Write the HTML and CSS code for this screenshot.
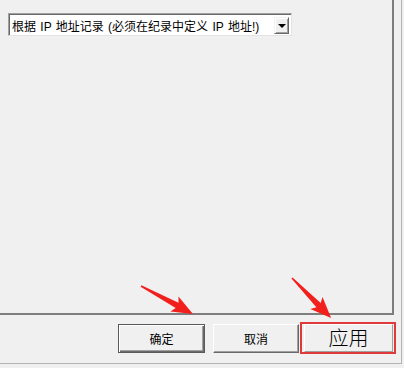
FILE: index.html
```html
<!DOCTYPE html>
<html lang="zh-CN">
<head>
<meta charset="utf-8">
<link rel="stylesheet" href="styles.css">
</head>
<body>
<div class="frame">
  <div class="panel">
    <div class="combo">
      <span class="combo-text">根据 IP 地址记录 (必须在纪录中定义 IP 地址!)</span>
      <span class="combo-btn"><span class="tri"></span></span>
    </div>
  </div>
  <div class="buttons">
    <div class="btn btn-default">确定</div>
    <div class="btn">取消</div>
    <div class="mark"><div class="btn btn-apply">应用</div></div>
  </div>
</div>
<svg class="arrows" width="404" height="368" viewBox="0 0 404 368">
  <g transform="translate(141,286) rotate(28.3)">
    <polygon points="0,-0.8 41,-3 38,-8.5 59,0 38,8.5 41,3 0,0.8" fill="#f2201c"/>
  </g>
  <g transform="translate(292,278) rotate(45.7)">
    <polygon points="0,-0.8 38,-3 35,-8.5 56,0 35,8.5 38,3 0,0.8" fill="#f2201c"/>
  </g>
</svg>
</body>
</html>
```
FILE: styles.css
```css
html, body {
  margin: 0;
  padding: 0;
  background: #f0f0f0;
}
body {
  width: 404px;
  height: 368px;
  overflow: hidden;
  position: relative;
  font-family: "Liberation Sans", "Noto Sans CJK SC", sans-serif;
}
.frame {
  width: 401px;
  height: 363px;
  border-right: 1px solid #b4b4b4;
  border-bottom: 1px solid #b4b4b4;
  background: #f0f0f0;
}
.panel {
  border-right: 2px solid #7e7e7e;
  border-bottom: 2px solid #7e7e7e;
  padding-top: 13px;
  padding-left: 8px;
  box-sizing: border-box;
  width: 394px;
  height: 315px;
}
.combo {
  width: 284px;
  height: 23px;
  box-sizing: border-box;
  background: #fff;
  border-top: 1px solid #a0a0a0;
  border-left: 1px solid #a0a0a0;
  border-right: 1px solid #e3e3e3;
  border-bottom: 1px solid #e3e3e3;
  box-shadow: inset 1px 1px 0 #696969;
  display: flex;
  align-items: center;
  padding: 0 2px 0 2px;
}
.combo-text {
  flex: 1;
  font-size: 12px;
  word-spacing: 1px;
  color: #000;
  white-space: nowrap;
  overflow: hidden;
  padding-left: 1px;
  padding-top: 1px;
}
.combo-btn {
  width: 15px;
  height: 17px;
  box-sizing: border-box;
  background: #f0f0f0;
  border-top: 1px solid #f0f0f0;
  border-left: 1px solid #f0f0f0;
  border-right: 1px solid #696969;
  border-bottom: 1px solid #696969;
  box-shadow: inset 1px 1px 0 #fff, inset -1px -1px 0 #a0a0a0;
  display: flex;
  align-items: center;
  justify-content: center;
  margin-top: 1px;
}
.tri {
  width: 0;
  height: 0;
  border-left: 4px solid transparent;
  border-right: 4px solid transparent;
  border-top: 4px solid #000;
  margin-top: 1px;
}
.buttons {
  display: flex;
  align-items: flex-start;
  padding-left: 118px;
  padding-top: 7px;
  gap: 8px;
}
.btn {
  box-sizing: border-box;
  width: 86px;
  height: 29px;
  margin-top: 2px;
  background: #f0f0f0;
  border-top: 1px solid #fff;
  border-left: 1px solid #fff;
  border-right: 1px solid #696969;
  border-bottom: 1px solid #696969;
  box-shadow: inset -1px -1px 0 #a0a0a0;
  display: flex;
  align-items: center;
  justify-content: center;
  font-size: 12px;
  color: #000;
}
.btn-default {
  width: 87px;
  border: 1px solid #5a5a5a;
  box-shadow: inset 1px 1px 0 #fff, inset -1px -1px 0 #696969, inset -2px -2px 0 #a0a0a0;
}
.mark {
  margin-left: -7px;
  border: 2px solid #e0393c;
  width: 96px;
  height: 32px;
  box-sizing: border-box;
  padding: 0 1px 0 2px;
}
.btn-apply {
  width: 89px;
  height: 28px;
  margin-top: 0;
  padding-bottom: 2px;
  font-size: 20px;
  font-family: "Noto Sans CJK SC", sans-serif;
  font-weight: 300;
  border-right: 1px solid #a0a0a0;
  border-bottom: 1px solid #a0a0a0;
  box-shadow: none;
}
.arrows {
  position: absolute;
  left: 0;
  top: 0;
  pointer-events: none;
}
```
